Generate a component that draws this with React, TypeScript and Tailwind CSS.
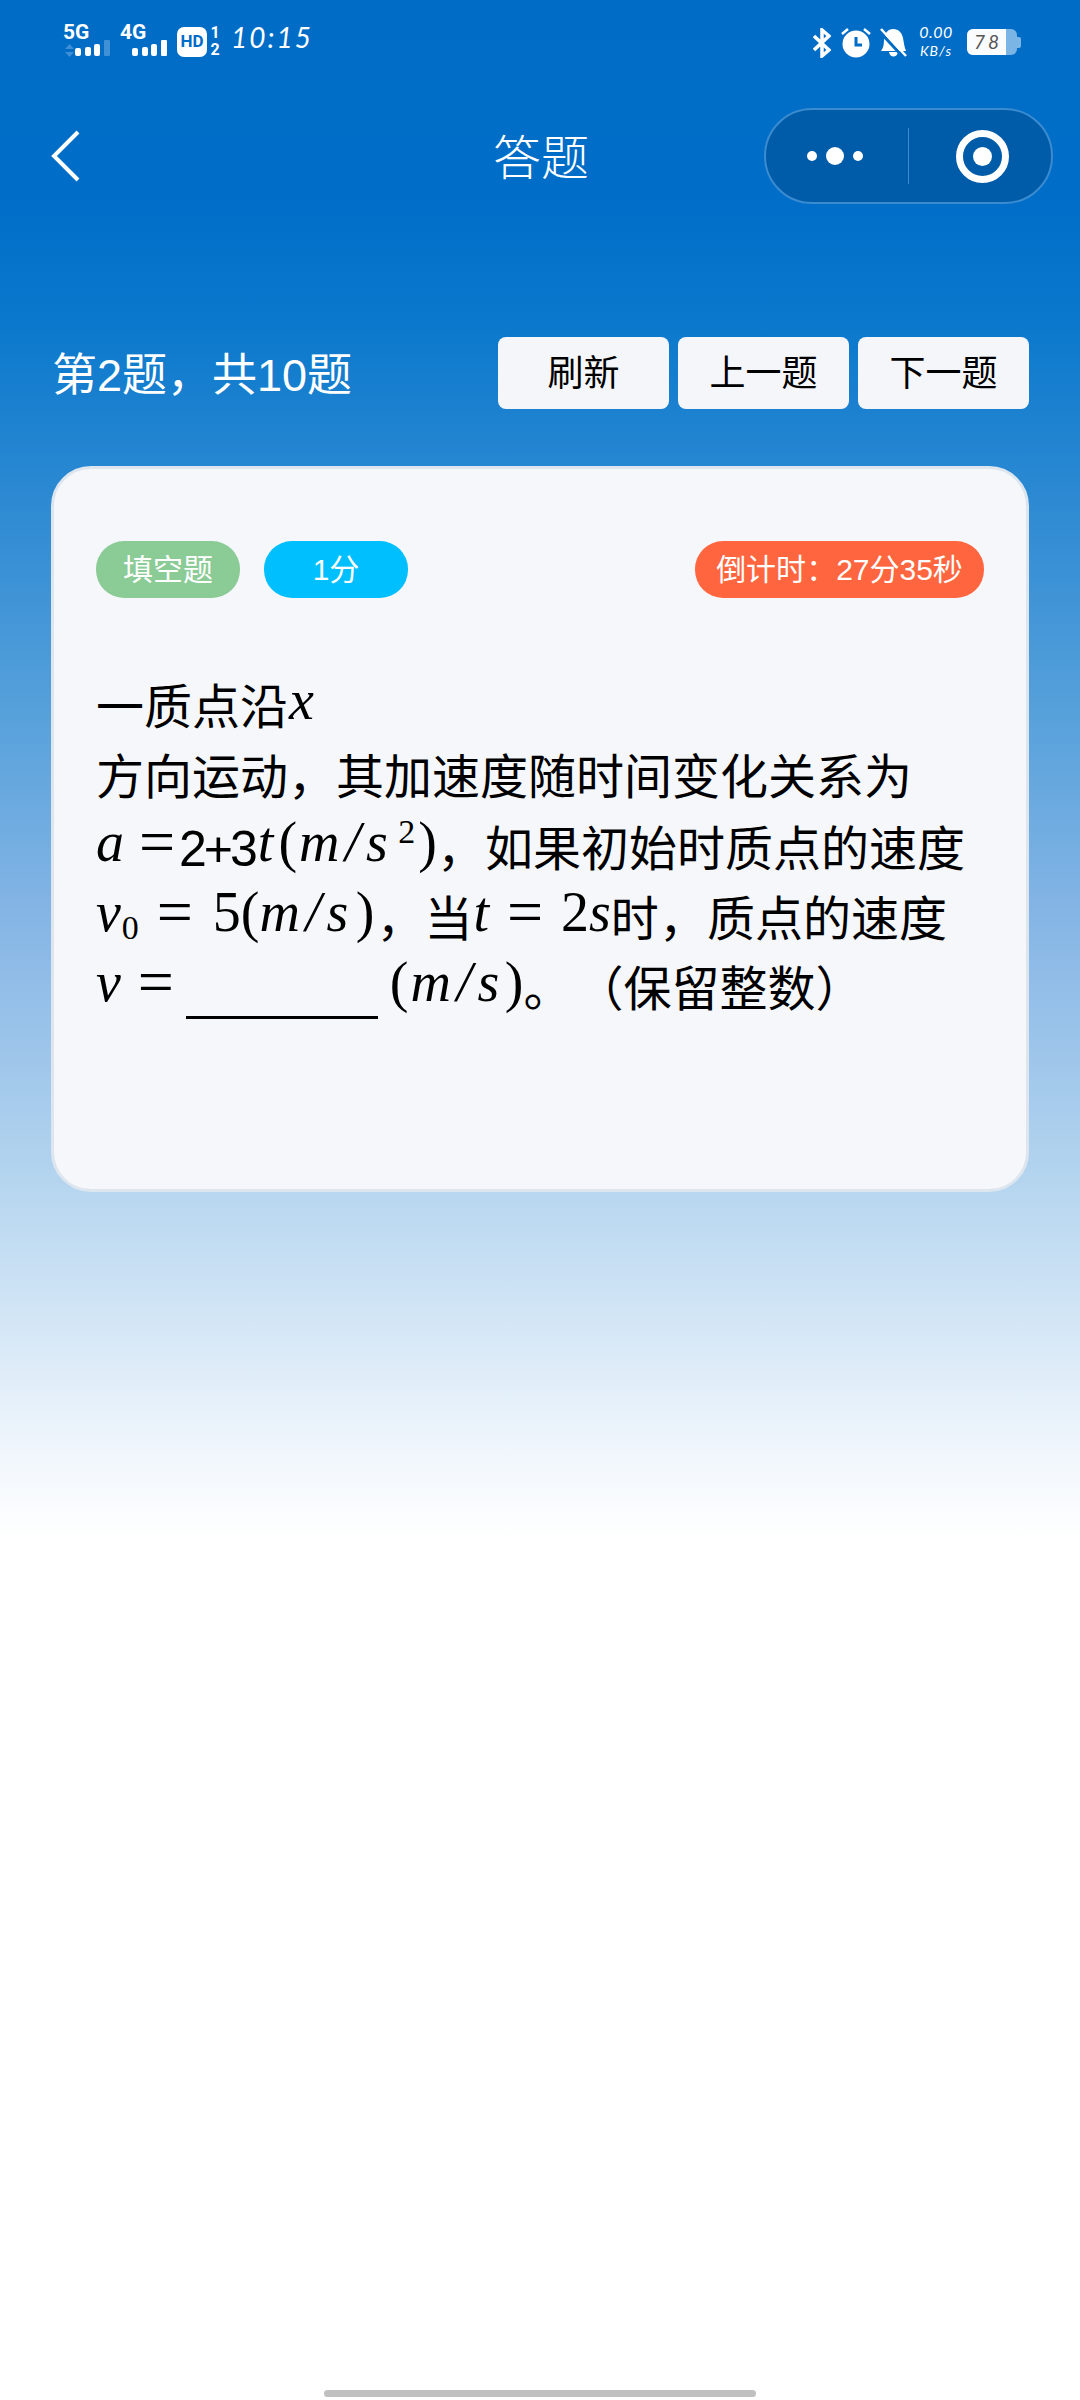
import { ReactNode } from 'react';

const cjk = "font-['Liberation_Sans','Noto_Sans_CJK_SC',sans-serif]";

// full-width punctuation
const COMMA = '\uFF0C';
const COLON = '\uFF1A';
const LP = '\uFF08';
const RP = '\uFF09';

function M({ children, className = '' }: { children: ReactNode; className?: string }) {
  return <span className={`relative top-[-5px] leading-none text-[56px] font-['Liberation_Serif',serif] italic ${className}`}>{children}</span>;
}

function R({ children, className = '' }: { children: ReactNode; className?: string }) {
  return <span className={`relative top-[-5px] leading-none text-[56px] font-['Liberation_Serif',serif] ${className}`}>{children}</span>;
}

// superscript / subscript digit
function Script({ children, className = '' }: { children: ReactNode; className?: string }) {
  return <span className={`relative leading-none text-[34px] font-['Liberation_Serif',serif] ${className}`}>{children}</span>;
}

function Eq({ className = '' }: { className?: string }) {
  return <span className={`relative top-[-3px] w-[36px] leading-none text-[64px] font-['Liberation_Serif',serif] ${className}`}>=</span>;
}

function Signal({ label, arrows, dim }: { label: string; arrows?: boolean; dim?: boolean }) {
  return (
    <div className="relative w-[57px] h-[32px]">
      <span className="absolute left-0 top-[-5px] text-[21px] font-bold leading-[24px] text-white font-['Roboto',sans-serif]">
        {label}
      </span>
      {arrows && (
        <svg width="9" height="13" viewBox="0 0 9 13" className="absolute left-[2px] top-[19px]" fill="#3f8fd6">
          <path d="M4.500 0L9 5H0zM0 8h9l-4.500 5z" />
        </svg>
      )}
      <div className="absolute left-[12px] top-[15px] flex items-end gap-[3.500px]">
        <span className="w-[6px] h-[8px] rounded-[2px] bg-white" />
        <span className="w-[6px] h-[9px] rounded-[2px] bg-white" />
        <span className="w-[6px] h-[12px] rounded-[2px] bg-white" />
        <span className={`w-[6px] h-[16px] rounded-[1px] ${dim ? 'bg-white/25' : 'bg-white'}`} />
      </div>
    </div>
  );
}

function StatusBar() {
  return (
    <div className="h-[69px] pt-[25px] pl-[63px] pr-[59px] flex items-start justify-between">
      <div className="flex items-start">
        <Signal label="5G" arrows dim />
        <Signal label="4G" />
        <div className="w-[30px] h-[30px] mt-[2px] rounded-[7px] bg-white flex items-center justify-center text-[17px] font-bold text-[#006cc6] font-['Roboto',sans-serif]">
          HD
        </div>
        <div className="ml-[3px] w-[10px] mt-[-1px] flex flex-col items-center text-[16px] leading-[17px] font-bold text-white font-['Roboto',sans-serif]">
          <span>1</span>
          <span>2</span>
        </div>
        <span className="ml-[11px] mt-[-8px] text-[28px] leading-[40px] italic font-normal tracking-[2px] text-white font-['Lato',sans-serif]">
          10:15
        </span>
      </div>
      <div className="flex items-start">
        <svg width="18" height="30" viewBox="0 0 18 30" className="mt-[3px]" fill="none" stroke="white" strokeWidth="3.500">
          <path d="M1 8l15 14-7 6V2l7 6L1 22" />
        </svg>
        <svg width="30" height="30" viewBox="0 0 30 30" className="ml-[10px] mt-[3px]">
          <circle cx="15" cy="16" r="13.500" fill="white" />
          <path d="M15 9v8h6" fill="none" stroke="#006cc6" strokeWidth="3" />
          <path d="M1 6l6-5M29 6l-6-5" stroke="white" strokeWidth="2.500" />
        </svg>
        <svg width="27" height="29" viewBox="0 0 27 29" className="ml-[9px] mt-[3px]">
          <path d="M13 1c6 0 9 4 10 9 1 5 1 8 3 13H1c3-4 3-8 3-13 1-5 4-9 9-9zM9 24h9c-1 6-8 6-9 0z" fill="white" />
          <path d="M1 5l23 25" stroke="#006cc6" strokeWidth="3" />
          <path d="M1 1l25 27" stroke="white" strokeWidth="2.500" />
        </svg>
        <div className="ml-[13px] mt-[-2px] w-[32px] flex flex-col items-center italic font-normal text-white font-['Lato',sans-serif]">
          <span className="text-[16px] leading-[18px] tracking-[0.500px]">0.00</span>
          <span className="text-[14px] leading-[14px] tracking-[1px] mt-[3px]">KB/s</span>
        </div>
        <div className="ml-[15px] mt-[4px] w-[50px] h-[26px] rounded-[6px] bg-[#7ab5e6] overflow-hidden">
          <div className="h-full w-[39px] bg-[#fafcff] flex items-center justify-end pr-[4px] text-[19px] italic tracking-[3px] text-[#555555] font-['Lato',sans-serif]">
            78
          </div>
        </div>
        <div className="mt-[12px] w-[4px] h-[11px] rounded-r-[2px] bg-[#7ab5e6]" />
      </div>
    </div>
  );
}

function NavBar() {
  return (
    <div className="relative h-[96px] mt-[39px] ml-[51px] mr-[27px] flex items-center justify-between">
      <svg width="29" height="52" viewBox="0 0 29 52" fill="none" stroke="white" strokeWidth="4">
        <path d="M27 2L3 26l24 24" />
      </svg>
      <span className="absolute left-[442px] top-[16px] text-[48px] leading-[60px] font-light text-white font-['Noto_Sans_CJK_SC',sans-serif]">
        答题
      </span>
      <div className="w-[289px] h-[96px] rounded-[48px] bg-[#005ca8] border-2 border-[#3b8bd0] flex items-center">
        <div className="w-[142px] pr-[4px] flex items-center justify-center gap-[9px]">
          <span className="w-[10px] h-[10px] rounded-full bg-white" />
          <span className="w-[18px] h-[18px] rounded-full bg-white" />
          <span className="w-[10px] h-[10px] rounded-full bg-white" />
        </div>
        <div className="w-[1px] h-[56px] bg-[#3b8bd0]" />
        <div className="flex-1 pl-[4px] flex justify-center">
          <div className="w-[53px] h-[53px] rounded-full border-[7px] border-white flex items-center justify-center">
            <span className="w-[19px] h-[19px] rounded-full bg-white" />
          </div>
        </div>
      </div>
    </div>
  );
}

function QuestionHeader() {
  return (
    <div className="mt-[133px] pl-[52px] pr-[51px] flex items-center justify-between">
      <span className={`text-[45px] leading-[60px] mt-[6px] text-white ${cjk}`}>第2题{COMMA}共10题</span>
      <div className="flex gap-[9px]">
        {['刷新', '上一题', '下一题'].map((label) => (
          <button
            key={label}
            className={`w-[171px] h-[72px] pt-[2px] rounded-[8px] bg-[#f5f6fa] text-[36px] text-black ${cjk}`}
          >
            {label}
          </button>
        ))}
      </div>
    </div>
  );
}

function Pill({ className, children }: { className: string; children: ReactNode }) {
  return (
    <div className={`h-[57px] rounded-[28px] flex items-center justify-center text-[30px] text-white ${cjk} ${className}`}>
      {children}
    </div>
  );
}

function Question() {
  const line = 'flex items-baseline h-[70px] whitespace-pre';
  return (
    <div className={`mt-[75px] text-[48px] leading-[70px] text-black ${cjk}`}>
      <div className={line}>
        <span>一质点沿</span>
        <M className="ml-[1px]">x</M>
      </div>
      <div className={line}>方向运动{COMMA}其加速度随时间变化关系为</div>
      <div className={line}>
        <M>a</M>
        <Eq className="ml-[15px]" />
        <span className="ml-[4px] text-[50px] tracking-[-3px]">2+3</span>
        <M className="ml-[3px]">t</M>
        <R className="ml-[5px]">(</R>
        <M className="ml-[2px] tracking-[5.500px]">m/s</M>
        <Script className="top-[-23px] ml-[5px]">2</Script>
        <R className="ml-[3px]">)</R>
        <span>{COMMA}如果初始时质点的速度</span>
      </div>
      <div className={line}>
        <M>v</M>
        <Script className="top-[3px] ml-[1px]">0</Script>
        <Eq className="ml-[18px]" />
        <R className="ml-[20px]">5</R>
        <R>(</R>
        <M className="tracking-[5.500px]">m/s</M>
        <R className="ml-[2px]">)</R>
        <span className="ml-[2px]">{COMMA}当</span>
        <M className="ml-[1px]">t</M>
        <Eq className="ml-[18px]" />
        <R className="ml-[18px]">2</R>
        <M>s</M>
        <span>时{COMMA}质点的速度</span>
      </div>
      <div className={line}>
        <M>v</M>
        <Eq className="ml-[17px]" />
        <div className="relative top-[-4px] ml-[12px] w-[192px] self-end h-[3px] bg-black" />
        <R className="ml-[12px]">(</R>
        <M className="ml-[2px] tracking-[5.500px]">m/s</M>
        <R>)</R>
        <span>。</span>
        <span className="ml-[4px]">{LP}保留整数{RP}</span>
      </div>
    </div>
  );
}

export default function App() {
  return (
    <div className="relative w-[1080px] h-[2400px] overflow-hidden bg-[linear-gradient(180deg,#006cc6_0px,#006ec8_200px,#0a78cc_320px,#2f8bd3_512px,#5ba3dc_735px,#85b5e5_914px,#b5d5ef_1182px,#dcebf8_1360px,#f0f6fc_1450px,#ffffff_1540px)]">
      <StatusBar />
      <NavBar />
      <QuestionHeader />
      <div className="mt-[57px] ml-[51px] w-[978px] h-[726px] rounded-[40px] bg-[#f5f7fa] border-[3px] border-[#dde6ef] pt-[72px] pl-[42px] pr-[42px]">
        <div className="flex items-center">
          <Pill className="w-[144px] bg-[#8bcb96]">填空题</Pill>
          <Pill className="ml-[24px] w-[144px] bg-[#00bfff]">1分</Pill>
          <Pill className="ml-auto w-[289px] bg-[#ff6640]">倒计时{COLON}27分35秒</Pill>
        </div>
        <Question />
      </div>
      <div className="absolute left-[324px] top-[2390px] w-[432px] h-[7px] rounded-full bg-[#c0c0c0]" />
    </div>
  );
}
